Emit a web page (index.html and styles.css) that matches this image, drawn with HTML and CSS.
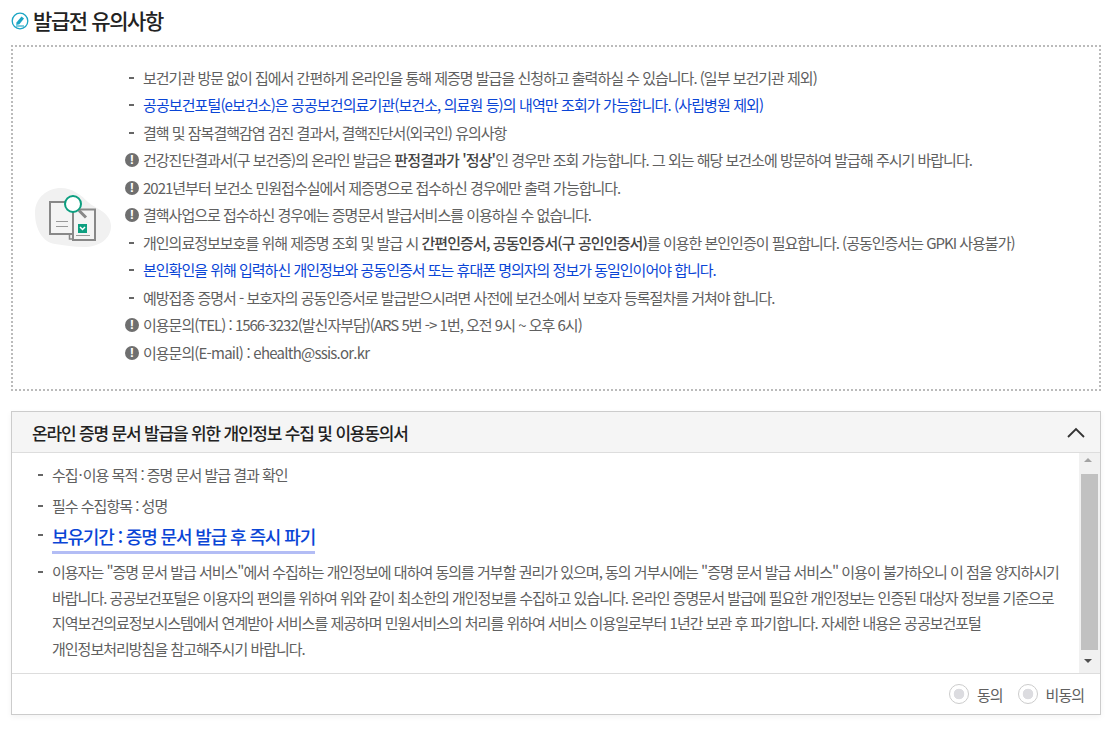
FILE: index.html
```
<!DOCTYPE html>
<html lang="ko">
<head>
<meta charset="utf-8">
<title>발급전 유의사항</title>
<link rel="stylesheet" href="styles.css">
</head>
<body>
<h2 class="title">
<svg class="title-icon" width="18" height="18" viewBox="0 0 18 18"><circle cx="9" cy="9" r="7.8" fill="#fff" stroke="#1ba5c4" stroke-width="1.3"/><path d="M5.5 10.5 10.5 4.6 13 6.6 8.4 12.2 5.2 13Z" fill="#1ba5c4"/><path d="M5 14h8" stroke="#1ba5c4" stroke-width="1.1"/></svg>
발급전 유의사항</h2>
<section class="notice">
<div class="notice-art">
<svg width="78" height="62" viewBox="0 0 78 62">
<path d="M0 26C0 11 12 1 26 1c11 0 20 7 27 14 6 6 23 10 23 24 0 13-12 21-27 21-10 0-20-2-29-3C7 55 0 41 0 26Z" fill="#f1f1f1"/>
<path d="M15 15H40V47H15Z" fill="#f4f4f4" stroke="#888" stroke-width="2"/>
<path d="M21 34.500H33M21 39.500H33" stroke="#999"/>
<path d="M38 22.500H60V53H38Z" fill="#f4f4f4" stroke="#888" stroke-width="2"/>
<path d="M34.500 47V52H38" fill="none" stroke="#888" stroke-width="1.500"/>
<path d="M41 48.500H55" stroke="#999"/>
<rect x="43" y="37" width="9" height="9" fill="#0d9f80"/>
<path d="M45 40l2.500 2.500L50 40" fill="none" stroke="#fff" stroke-width="1.500"/>
<circle cx="38" cy="17" r="8" fill="#fff" stroke="#0d9f80" stroke-width="2"/>
<path d="M44 23.500l7 7" stroke="#888" stroke-width="3"/>
</svg>
</div>
<ul class="notes">
<li class="dash">보건기관 방문 없이 집에서 간편하게 온라인을 통해 제증명 발급을 신청하고 출력하실 수 있습니다. (일부 보건기관 제외)</li>
<li class="dash blue wide">공공보건포털(e보건소)은 공공보건의료기관(보건소, 의료원 등)의 내역만 조회가 가능합니다. (사립병원 제외)</li>
<li class="dash">결핵 및 잠복결핵감염 검진 결과서, 결핵진단서(외국인) 유의사항</li>
<li class="warn">건강진단결과서(구 보건증)의 온라인 발급은 <b>판정결과가 '정상'</b>인 경우만 조회 가능합니다. 그 외는 해당 보건소에 방문하여 발급해 주시기 바랍니다.</li>
<li class="warn">2021년부터 보건소 민원접수실에서 제증명으로 접수하신 경우에만 출력 가능합니다.</li>
<li class="warn">결핵사업으로 접수하신 경우에는 증명문서 발급서비스를 이용하실 수 없습니다.</li>
<li class="dash">개인의료정보보호를 위해 제증명 조회 및 발급 시 <b>간편인증서, 공동인증서(구 공인인증서)</b>를 이용한 본인인증이 필요합니다. (공동인증서는 GPKI 사용불가)</li>
<li class="dash blue">본인확인을 위해 입력하신 개인정보와 공동인증서 또는 휴대폰 명의자의 정보가 동일인이어야 합니다.</li>
<li class="dash">예방접종 증명서 - 보호자의 공동인증서로 발급받으시려면 사전에 보건소에서 보호자 등록절차를 거쳐야 합니다.</li>
<li class="warn">이용문의(TEL) : 1566-3232(발신자부담)(ARS 5번 -&gt; 1번, 오전 9시 ~ 오후 6시)</li>
<li class="warn">이용문의<span class="latin">(E-mail) : ehealth@ssis.or.kr</span></li>
</ul>
</section>
<section class="panel">
<header class="panel-head">
<h3>온라인 증명 문서 발급을 위한 개인정보 수집 및 이용동의서</h3>
<svg width="18" height="11" viewBox="0 0 18 11"><path d="M1 10 9 2l8 8" fill="none" stroke="#333" stroke-width="1.800"/></svg>
</header>
<div class="panel-body">
<ul class="terms">
<li>수집<span class="mid">·</span>이용 목적 : 증명 문서 발급 결과 확인</li>
<li>필수 수집항목 : 성명</li>
<li class="key"><strong>보유기간 : 증명 문서 발급 후 즉시 파기</strong></li>
<li>이용자는 "증명 문서 발급 서비스"에서 수집하는 개인정보에 대하여 동의를 거부할 권리가 있으며, 동의 거부시에는 "증명 문서 발급 서비스" 이용이 불가하오니 이 점을 양지하시기 바랍니다. 공공보건포털은 이용자의 편의를 위하여 위와 같이 최소한의 개인정보를 수집하고 있습니다. 온라인 증명문서 발급에 필요한 개인정보는 인증된 대상자 정보를 기준으로 지역보건의료정보시스템에서 연계받아 서비스를 제공하며 민원서비스의 처리를 위하여 서비스 이용일로부터 1년간 보관 후 파기합니다. 자세한 내용은 공공보건포털<br>개인정보처리방침을 참고해주시기 바랍니다.</li>
</ul>
<div class="scrollbar">
<span class="arrow up"></span>
<span class="thumb"></span>
<span class="arrow down"></span>
</div>
</div>
<footer class="panel-foot">
<label class="radio"><span class="dot"></span>동의</label>
<label class="radio"><span class="dot"></span>비동의</label>
</footer>
</section>
</body>
</html>
```
FILE: styles.css
```
* { box-sizing: border-box; }
html, body { margin: 0; padding: 0; }
body {
  width: 1114px;
  height: 731px;
  overflow: hidden;
  background: #fff;
  padding: 0 13px 0 11px;
  font-family: "Noto Sans CJK KR", "Noto Sans", sans-serif;
  font-size: 15px;
  letter-spacing: -1px;
  color: #606060;
}
.title {
  display: flex;
  align-items: center;
  gap: 4px;
  margin: 0;
  height: 45px;
  padding-bottom: 6px;
  font-size: 21px;
  font-weight: 500;
  letter-spacing: -1.400px;
  color: #222;
}
.title-icon { margin-top: 2px; }
.notice {
  display: flex;
  height: 346px;
  border: 2px dotted #bbb;
}
.notice-art { width: 112px; flex: none; padding: 140px 0 0 22px; }
.notes { list-style: none; margin: 0; padding: 16.750px 0 0; }
.notes li { height: 27.5px; line-height: 27.5px; white-space: nowrap; position: relative; padding-left: 18px; }
.notes b { font-weight: 500; color: #444; letter-spacing: -0.900px; }
.notes .blue { color: #0a45d6; }
.notes .wide { letter-spacing: -0.900px; }
.latin { letter-spacing: -0.760px; }
.mid { margin: 0 1px; }
.dash::before {
  content: "";
  position: absolute;
  left: 4px;
  top: 13px;
  width: 5px;
  height: 2px;
  background: #666;
}
.warn::before {
  content: "!";
  position: absolute;
  left: 0;
  top: 7px;
  width: 14px;
  height: 14px;
  border-radius: 50%;
  background: #6f6f6f;
  color: #fff;
  font: 700 13px/14px "Liberation Sans", sans-serif;
  letter-spacing: 0;
  text-align: center;
}
.panel {
  margin-top: 20px;
  height: 304px;
  border: 1px solid #ccc;
  box-shadow: 0 2px 6px rgba(0,0,0,.05);
}
.panel-head {
  display: flex;
  align-items: center;
  justify-content: space-between;
  height: 41px;
  padding: 0 15px 0 20px;
  background: #f5f5f5;
  border-bottom: 1px solid #ddd;
}
.panel-head h3 { margin: 0; font-size: 17px; font-weight: 500; letter-spacing: -1.180px; color: #222; }
.panel-body { display: flex; height: 221px; border-bottom: 1px solid #ddd; }
.terms { flex: 1; list-style: none; margin: 0; padding: 9px 18px 0 40px; }
.terms li { position: relative; line-height: 25.500px; margin-bottom: 5px; }
.terms li::before {
  content: "";
  position: absolute;
  left: -14px;
  top: 12px;
  width: 5px;
  height: 2px;
  background: #666;
}
.terms .key { margin: -1px 0 0; height: 37px; }
.terms .key strong {
  display: inline-block;
  font-size: 18px;
  font-weight: 500;
  line-height: 29px;
  letter-spacing: -1.130px;
  color: #0a45d6;
  border-bottom: 3px solid #b3bdf5;
}
.scrollbar { width: 21px; flex: none; display: flex; flex-direction: column; background: #f1f1f1; }
.arrow { flex: none; position: relative; }
.arrow.up { height: 21px; }
.arrow.down { height: 23px; }
.arrow::after { content: ""; position: absolute; left: 5px; border: 4.500px solid transparent; }
.arrow.up::after { top: 1px; border-bottom-color: #a3a3a3; }
.arrow.down::after { top: 9px; border-top-color: #505050; }
.thumb { flex: 1; margin: 0 2px; background: #c1c1c1; }
.panel-foot {
  display: flex;
  justify-content: flex-end;
  align-items: center;
  gap: 15px;
  height: 40px;
  padding-right: 16px;
}
.radio { display: flex; align-items: center; gap: 8px; }
.dot {
  width: 20px;
  height: 20px;
  border: 1px solid #ccc;
  border-radius: 50%;
  background: radial-gradient(circle, #dcdce0 0 5px, #fff 5.600px);
}
```
